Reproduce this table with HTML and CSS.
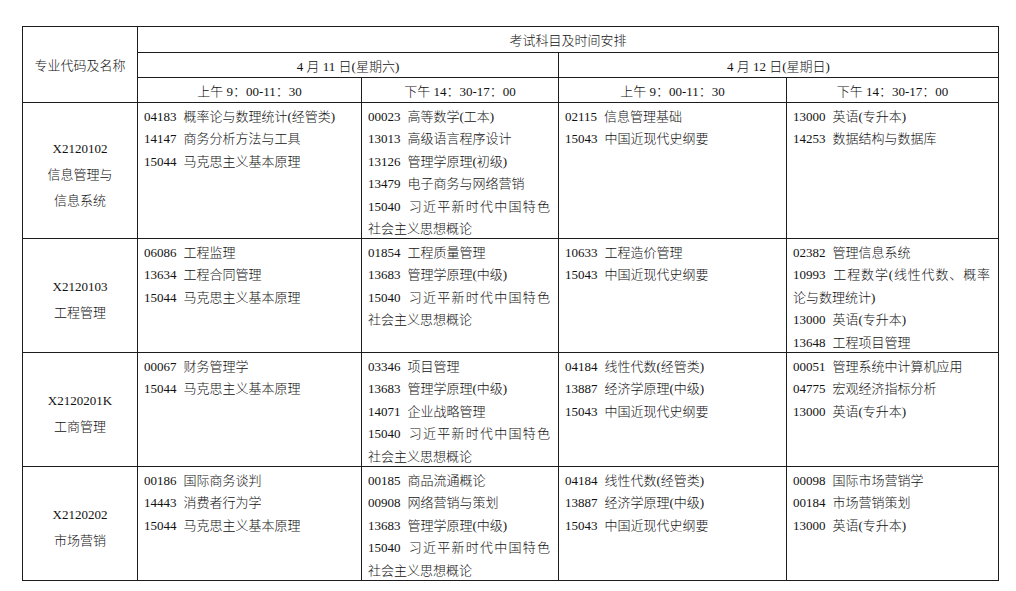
FILE: index.html
```html
<!DOCTYPE html>
<html lang="zh-CN">
<head>
<meta charset="utf-8">
<title>考试科目及时间安排</title>
<link rel="stylesheet" href="styles.css">
</head>
<body>
<div class="page">
  <div class="grid">
    <div class="cell head rows3">专业代码及名称</div>
    <div class="cell head cols4">考试科目及时间安排</div>
    <div class="cell head cols2">4 月 11 日(星期六)</div>
    <div class="cell head cols2">4 月 12 日(星期日)</div>
    <div class="cell head">上午 9：00-11：30</div>
    <div class="cell head">下午 14：30-17：00</div>
    <div class="cell head">上午 9：00-11：30</div>
    <div class="cell head">下午 14：30-17：00</div>

    <div class="cell major"><div>X2120102</div><div>信息管理与</div><div>信息系统</div></div>
    <div class="cell list">
      <div class="item"><span class="c">04183</span>概率论与数理统计(经管类)</div>
      <div class="item"><span class="c">14147</span>商务分析方法与工具</div>
      <div class="item"><span class="c">15044</span>马克思主义基本原理</div>
    </div>
    <div class="cell list">
      <div class="item"><span class="c">00023</span>高等数学(工本)</div>
      <div class="item"><span class="c">13013</span>高级语言程序设计</div>
      <div class="item"><span class="c">13126</span>管理学原理(初级)</div>
      <div class="item"><span class="c">13479</span>电子商务与网络营销</div>
      <div class="item"><span class="c">15040</span>习近平新时代中国特色社会主义思想概论</div>
    </div>
    <div class="cell list">
      <div class="item"><span class="c">02115</span>信息管理基础</div>
      <div class="item"><span class="c">15043</span>中国近现代史纲要</div>
    </div>
    <div class="cell list">
      <div class="item"><span class="c">13000</span>英语(专升本)</div>
      <div class="item"><span class="c">14253</span>数据结构与数据库</div>
    </div>

    <div class="cell major"><div>X2120103</div><div>工程管理</div></div>
    <div class="cell list">
      <div class="item"><span class="c">06086</span>工程监理</div>
      <div class="item"><span class="c">13634</span>工程合同管理</div>
      <div class="item"><span class="c">15044</span>马克思主义基本原理</div>
    </div>
    <div class="cell list">
      <div class="item"><span class="c">01854</span>工程质量管理</div>
      <div class="item"><span class="c">13683</span>管理学原理(中级)</div>
      <div class="item"><span class="c">15040</span>习近平新时代中国特色社会主义思想概论</div>
    </div>
    <div class="cell list">
      <div class="item"><span class="c">10633</span>工程造价管理</div>
      <div class="item"><span class="c">15043</span>中国近现代史纲要</div>
    </div>
    <div class="cell list">
      <div class="item"><span class="c">02382</span>管理信息系统</div>
      <div class="item"><span class="c">10993</span>工程数学(线性代数、概率论与数理统计)</div>
      <div class="item"><span class="c">13000</span>英语(专升本)</div>
      <div class="item"><span class="c">13648</span>工程项目管理</div>
    </div>

    <div class="cell major"><div>X2120201K</div><div>工商管理</div></div>
    <div class="cell list">
      <div class="item"><span class="c">00067</span>财务管理学</div>
      <div class="item"><span class="c">15044</span>马克思主义基本原理</div>
    </div>
    <div class="cell list">
      <div class="item"><span class="c">03346</span>项目管理</div>
      <div class="item"><span class="c">13683</span>管理学原理(中级)</div>
      <div class="item"><span class="c">14071</span>企业战略管理</div>
      <div class="item"><span class="c">15040</span>习近平新时代中国特色社会主义思想概论</div>
    </div>
    <div class="cell list">
      <div class="item"><span class="c">04184</span>线性代数(经管类)</div>
      <div class="item"><span class="c">13887</span>经济学原理(中级)</div>
      <div class="item"><span class="c">15043</span>中国近现代史纲要</div>
    </div>
    <div class="cell list">
      <div class="item"><span class="c">00051</span>管理系统中计算机应用</div>
      <div class="item"><span class="c">04775</span>宏观经济指标分析</div>
      <div class="item"><span class="c">13000</span>英语(专升本)</div>
    </div>

    <div class="cell major"><div>X2120202</div><div>市场营销</div></div>
    <div class="cell list">
      <div class="item"><span class="c">00186</span>国际商务谈判</div>
      <div class="item"><span class="c">14443</span>消费者行为学</div>
      <div class="item"><span class="c">15044</span>马克思主义基本原理</div>
    </div>
    <div class="cell list">
      <div class="item"><span class="c">00185</span>商品流通概论</div>
      <div class="item"><span class="c">00908</span>网络营销与策划</div>
      <div class="item"><span class="c">13683</span>管理学原理(中级)</div>
      <div class="item"><span class="c">15040</span>习近平新时代中国特色社会主义思想概论</div>
    </div>
    <div class="cell list">
      <div class="item"><span class="c">04184</span>线性代数(经管类)</div>
      <div class="item"><span class="c">13887</span>经济学原理(中级)</div>
      <div class="item"><span class="c">15043</span>中国近现代史纲要</div>
    </div>
    <div class="cell list">
      <div class="item"><span class="c">00098</span>国际市场营销学</div>
      <div class="item"><span class="c">00184</span>市场营销策划</div>
      <div class="item"><span class="c">13000</span>英语(专升本)</div>
    </div>
  </div>
</div>
</body>
</html>
```
FILE: styles.css
```css
html, body {
  margin: 0;
  padding: 0;
  background: #fff;
}
.page {
  padding: 26px 0 0 22px;
  font-family: "Liberation Serif", "Noto Sans CJK SC", serif;
  font-size: 13px;
  font-weight: 300;
  color: #111;
}
.grid {
  display: grid;
  grid-template-columns: 114px 223px 196px 227px 211px;
  grid-template-rows: 25px 24px 24px 135px 113px 113px 113px;
  gap: 1px;
  background: #1c1c1c;
  border: 1px solid #1c1c1c;
  width: max-content;
}
.cell {
  background: #fff;
  overflow: visible;
}
.head {
  display: flex;
  align-items: center;
  justify-content: center;
  white-space: nowrap;
}
.rows3 { grid-row: span 3; }
.cols4 { grid-column: span 4; }
.cols2 { grid-column: span 2; }
.major {
  display: flex;
  flex-direction: column;
  align-items: center;
  justify-content: center;
  padding-top: 8px;
  line-height: 26px;
}
.list {
  padding: 2.5px 8px 0 6px;
  line-height: 22.5px;
  text-align: justify;
}
.c {
  margin-right: 7px;
}
```
